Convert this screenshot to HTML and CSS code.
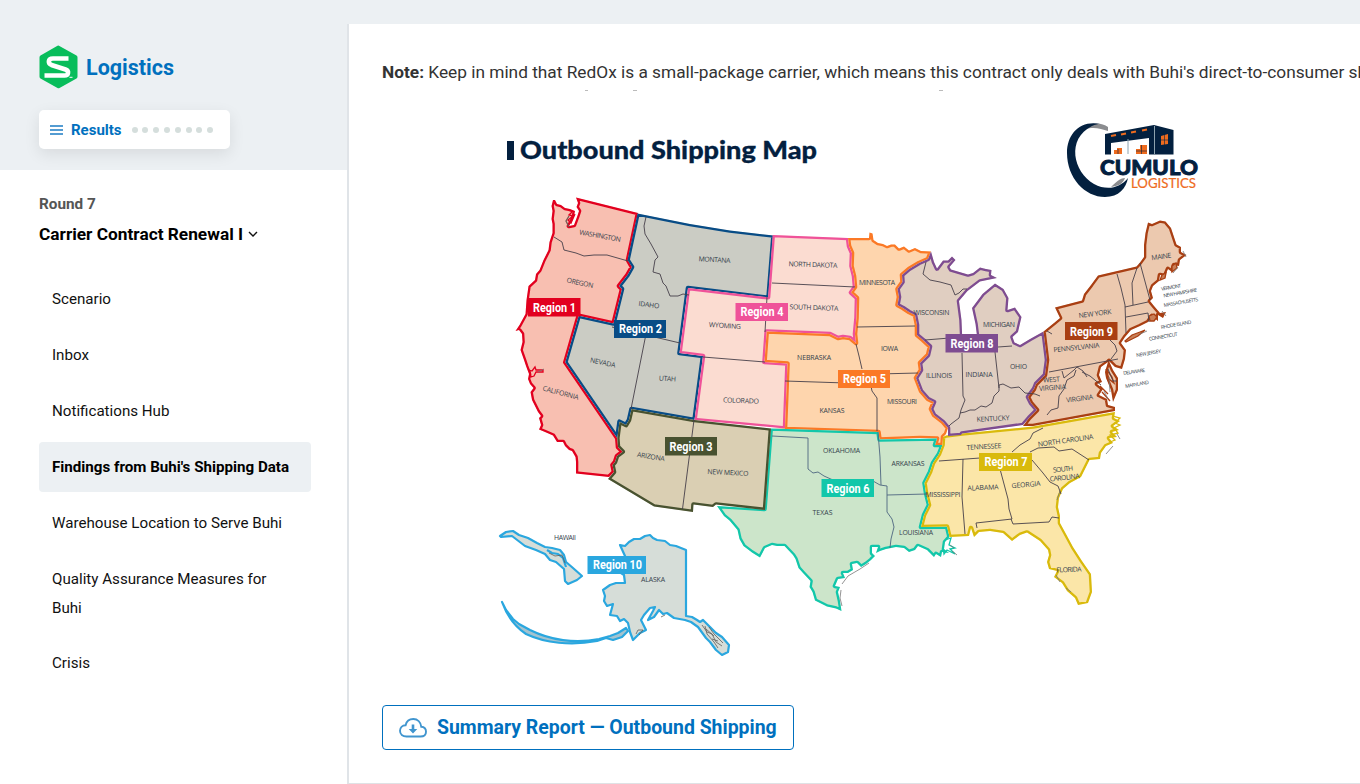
FILE: index.html
```
<!DOCTYPE html>
<html lang="en">
<head>
    <meta charset="UTF-8">
    <meta name="viewport" content="width=device-width, initial-scale=1.0">
    <title>Logistics - Findings from Buhi's Shipping Data</title>
    <link rel="stylesheet" href="styles.css">
</head>
<body>
    <div class="layout">
        <aside class="sidebar">
            <div class="sidebar-header">
                <div class="brand">
                    <svg class="brand-logo" viewBox="0 0 38 44">
                        <path d="M19 .5 L37 10.5 Q38 11 38 12.500 V31.500 Q38 33 37 33.500 L20 43 Q19 43.500 18 43 L1 33.500 Q0 33 0 31.500 V12.500 Q0 11 1 10.500 L18 .8 Z" fill="#08bd5b"/>
                        <path d="M29 13.500 H13.500 C8 13.500 8.500 18.500 12 20 L26 24.500 C30 26 29 30.500 25 30.500 H5" fill="none" stroke="#fff" stroke-width="4.600"/>
                        <path d="M30 32.300 H33" stroke="#fff" stroke-width="1"/>
                    </svg>
                    <span class="brand-name">Logistics</span>
                </div>
                <button class="results">
                    <svg class="menu-icon" viewBox="0 0 13 10">
                        <path d="M0 1H13M0 5H13M0 9H13" stroke="#1c7cc3" stroke-width="1.400"/>
                    </svg>
                    <span>Results</span>
                    <span class="dots"><i></i><i></i><i></i><i></i><i></i><i></i><i></i><i></i></span>
                </button>
            </div>
            <div class="round">
                <div class="round-label">Round 7</div>
                <div class="round-title">Carrier Contract Renewal I
                    <svg class="chevron" viewBox="0 0 10 6"><path d="M1 1L5 5L9 1" fill="none" stroke="#111" stroke-width="1.400"/></svg>
                </div>
            </div>
            <nav class="menu">
                <a>Scenario</a>
                <a>Inbox</a>
                <a>Notifications Hub</a>
                <a class="active">Findings from Buhi's Shipping Data</a>
                <a>Warehouse Location to Serve Buhi</a>
                <a>Quality Assurance Measures for Buhi</a>
                <a>Crisis</a>
            </nav>
        </aside>

        <main class="content">
            <p class="note"><strong>Note:</strong> Keep in mind that RedOx is a small-package carrier, which means this contract only deals with Buhi's direct-to-consumer shipments.</p>

            <!-- outbound shipping map -->
            <svg class="map" viewBox="382 90 978 600">
                <defs>
                    <path id="r1" d="M555 200L557 204L561 205L565 208L570 209L575 211L574 216L572 221L569 226L574 225L577 217L579 211L576.500 207L578 203L576 197.500L638 213L628 260L632 267L627.500 275L619 286L622 289L613.500 323.500L578.700 315.700L565.300 362.300L617.300 438.300L618 447L622.700 451.700L617 456L615 462L612.500 465L614 472L609 477L576 473.500L576 462L575.500 457L572 451L569 450L565 446L563 442L557 442L553 435.500L545 432L539 429.500L541 425L539 418L541 416L538 412L532 400L530.500 392L533.500 388L530 384L528 379L529 374L526 366L524 360L520.500 350L522.500 342L522 334L519 330L515.500 331L519.500 325L525.500 314L526.500 300L528.500 286L535 280L536 274L539.500 270L543.500 260L548.500 250L549.500 242L552.500 233L552.500 224L551.500 219L552.500 211L551.500 206L553 200Z"/>
                    <path id="r2" d="M637.500 213.500L690 224L730 230.500L773.500 235.500L768.500 297.800L688 288L679.500 353L703 356L694.500 420L631.500 409L629 420L626 425L619.500 421.700L617.300 438.300L565.300 362.300L578.700 315.700L613.500 323.500L622 289L619 286L627.500 275L632 267L627.500 260Z"/>
                    <path id="r3" d="M631.500 409L694.500 420L771 428.500L765 510L716 504.500L713 507L693.500 504.500L693 512L654 506.500L608 479L614 472L612.500 465L615 462L617 456L622.700 451.700L618 447L617.300 438.300L619.500 421.700L626 425L629 420Z"/>
                    <path id="r4" d="M772.700 235L848 238L849 246L852 253L851.500 266L854 276L855 287L851 292.500L857 298L856.500 318L855 334L856 343L850 338L843 337L838 338L830 334L766.700 331.500L764.500 362L787.500 363.500L785 428.500L694.500 420L703 356L679.500 353L688 288L768 297.300Z"/>
                    <path id="r5" d="M848 238L869 238L869.500 232.500L872.500 233.500L873.500 240L878 243L883 244L887 246L891 244.500L895 244.500L899 248.500L904 246.500L909 250.500L915 248L921 251L931 251.500L928 259L919 263L909 269L902 275L902.500 282L897.500 289L899 297L897.500 305L903 308L909 312L915 315L917 325L917 335L923 340L930 346.500L928 355L920 363L921 370L916 378L921 391L928 399L934 402L931 409L934 415L943 422L948 428L946 434L943 437L942.500 445L935 445L937 438.500L920 438L879.500 439.500L878.500 432L770.700 428.500L785 428.500L787.500 363.500L764.500 362L766.700 331.500L830 334L838 338L843 337L850 338L856 343L855 334L856.500 318L857 298L851 292.500L855 287L854 276L851.500 266L852 253L849 246Z"/>
                    <path id="r6" d="M770.700 428.500L878.500 432L879.500 439.500L937 438.500L935 445L942.500 445L939 454L933 463L930 472L924.500 483L926 493L929 505L924 515L921 527L947 526.500L949.500 537L945 542L944 549L949 553L942 552L941 557L936 554L934 557L927 550L918 546L915 550L909 552L904 548L896 547L886 549L880 551L876 553L878 547L872 547L872 553L875 556L871 560L866 564L861 567L857 563L852 564L853 570L848 573L843 573L845 578L838 579L835 586L840 587L838 592L840 601L841.500 611L836 608.500L827 606.500L815 600.500L812.500 592L809.500 587L810.500 581L803 573L798.500 568L795.500 559L793 555L784.500 546L777 546L772 545L765 548L760 557.500L752 552.500L743.500 546L739.500 539L737.500 530L729.500 520.500L724 516L717 506L764.500 509Z"/>
                    <path id="r7" d="M946 435.500L962 433.500L1033 426.500L1115 412L1114 418L1120 421L1113 426L1119 430L1112 432L1117 437L1109 438L1113 443L1106 446L1101 453L1100 459L1089.500 460L1084 471L1081 477L1070 483L1063 489L1059 498L1058 507L1060 516L1060 523L1066 534L1073 547L1082 561L1091 574L1092 592L1088 603L1078 605L1075 598L1067 591L1062 583L1054 577L1057 571L1049 569L1047 562L1049 555L1048 550L1040 541L1027 532.500L1020 535L1012 541L1003 533L990 531L979 532L974 537L971 528L969 536L949.500 537L947 526.500L921 527L924 515L929 505L926 493L924.500 483L930 472L933 463L939 454L942.500 445L943 437Z"/>
                    <path id="r8" d="M931 251.500L934 262L937 268.500L943 260.500L948 260.500L952 256.500L955.500 260L949.500 267L951 269.500L968 274.500L973 273L980 267.500L986 269L991.500 270L991 275L997 278L980 281.500L967.500 291L959 301L961.500 320L962.500 344H978L975.500 324L972 308L982.500 294L995 283.500L1003.500 289L1008.500 298L1007.500 310L1015 307.500L1021.500 317L1018 332L1012.500 337L1014.500 342.500L1020 345L1030 339L1043.500 331.500L1047 360L1045 375L1036 384L1034 389L1028 397L1031 403L1037 410L1029 418L1023 425L962 433.500L961 435L948 436L948 428L943 422L934 415L931 409L934 402L928 399L921 391L916 378L921 370L920 363L928 355L930 346.500L923 340L917 335L917 325L915 315L909 312L903 308L897.500 305L899 297L897.500 289L902.500 282L902 275L909 269L919 263L928 259Z"/>
                    <path id="r9" d="M1043.500 331.500L1054 323L1060 318L1055 307.500L1082 300.500L1084 294L1091 285L1098 275.500L1136.500 266.500L1140 262.500L1144 257L1144 245L1145.500 233L1148 222.500L1152 224L1160 220.500L1165.500 221.500L1171 228L1176.500 244.500L1181 247L1181 252L1186.500 255L1180 260L1179 266L1174 265L1172 272L1168 269L1165 276L1160 275L1159 281L1153 286L1151 291L1153 298L1150 301L1154 306L1160 313L1166 312L1163 318L1158 315L1158 321L1152 316L1148 322L1140 326L1131 330L1125 337L1121 343L1126 350L1125 359L1122 369L1115 367L1109 361L1113 370L1118 378L1118 390L1113 402L1111 390L1106 378L1105 372L1108 362L1101 367L1099 375L1102 382L1097 384L1103 389L1099 395L1107 399L1108 405L1115 407L1115 411L1033 426L1023 426L1029 418L1037 410L1031 403L1028 397L1034 389L1036 384L1045 375L1047 360Z"/>
                    <clipPath id="c1"><use href="#r1"/></clipPath>
                    <clipPath id="c2"><use href="#r2"/></clipPath>
                    <clipPath id="c3"><use href="#r3"/></clipPath>
                    <clipPath id="c4"><use href="#r4"/></clipPath>
                    <clipPath id="c5"><use href="#r5"/></clipPath>
                    <clipPath id="c6"><use href="#r6"/></clipPath>
                    <clipPath id="c7"><use href="#r7"/></clipPath>
                    <clipPath id="c8"><use href="#r8"/></clipPath>
                    <clipPath id="c9"><use href="#r9"/></clipPath>
                </defs>

                <path d="M585 90.500h3M633 90.500h4M939 90.500h4" stroke="#bbb"/>

                <rect x="507" y="141" width="7" height="19" fill="#03203f"/>
                <text class="map-title" x="520" y="159" textLength="297" lengthAdjust="spacingAndGlyphs">Outbound Shipping Map</text>

                <g class="cumulo">
                    <path d="M1108 127C1100 121 1086 122 1077 134C1088 125 1099 128 1108 131ZM1125 178C1120 178 1115 183 1111 187C1118 186 1123 184 1125 178Z" fill="#8b8c8f"/>
                    <path d="M1100 124C1080 120 1067 134 1067 153C1067 178 1085 197 1105 197C1119 197 1126 188 1128 178C1120 188 1107 191 1094 184C1073 172 1066 139 1092 126C1095 124.500 1098 124 1100 124Z" fill="#03203f"/>
                    <path d="M1105 134L1154 125L1173.500 130V154.500H1149V138L1111 143V154.500H1105Z" fill="#03203f"/>
                    <path d="M1128 139V154M1154.500 126V154" stroke="#8da2ae" stroke-width="1"/>
                    <path d="M1111 136l5-1M1121 134.500l5-1M1131 132.500l5-1M1142 130.500l5-1" stroke="#ee6b1e" stroke-width="2"/>
                    <path d="M1161 136l7-2v10l-7 1zM1114 150h3v-2h5v6h-8zM1136 149h4v-4h7v9h-11z" fill="#ee6b1e"/>
                    <path d="M1164.500 134v11M1161 140h7M1118 149v5M1141.500 145v9M1136 151h11" stroke="#03203f" stroke-width=".6"/>
                    <text class="cumulo-name" x="1100" y="174.500" textLength="98" lengthAdjust="spacingAndGlyphs">CUMULO</text>
                    <text class="cumulo-sub" x="1131" y="188" textLength="65" lengthAdjust="spacingAndGlyphs">LOGISTICS</text>
                </g>

                <g class="region-area">
                    <use href="#r1" clip-path="url(#c1)" fill="#f8bfb1" stroke="#e2001f"/>
                    <use href="#r2" clip-path="url(#c2)" fill="#cbccc4" stroke="#084c86"/>
                    <use href="#r4" clip-path="url(#c4)" fill="#fbdcd1" stroke="#ef5299"/>
                    <use href="#r5" clip-path="url(#c5)" fill="#fed5ad" stroke="#fb7926"/>
                    <use href="#r6" clip-path="url(#c6)" fill="#cce5ca" stroke="#12c7aa"/>
                    <use href="#r7" clip-path="url(#c7)" fill="#fbe6a8" stroke="#d9ba0c"/>
                    <use href="#r8" clip-path="url(#c8)" fill="#e0cec1" stroke="#7e4c91"/>
                    <use href="#r9" clip-path="url(#c9)" fill="#ecc9af" stroke="#a93f13"/>
                    <use href="#r3" clip-path="url(#c3)" fill="#dacfb3" stroke="#485230"/>
                </g>

                <!-- ragged coast details -->
                <g class="coast">
                    <path d="M573 211l-4 4 4 1-5 4 3 3 4-9M529 370l3 1 3-4 1 3 7 0 0 2-7 0-2 4-3 1-1-5z" stroke="#e2001f"/>
                    <path d="M1125 341l7-6 8-3 5-2-7 6-12 6zM1149 316l5-2 3 3-3 4-4 0zM1172 266l4-3 1 5-5 4zM1162 275l4-2-1 5-5 2z" stroke="#a93f13" fill="#c98058"/>
                    <path d="M1106 369l6 8 2 6-5-4zM1100 386l8 8M1102 392l8 9" stroke="#a93f13"/>
                    <path d="M1113 416l7 2-5 5 5 2-6 3 4 5-8 2 5 5-5 2" stroke="#d9ba0c"/>
                    <path d="M945 540l6-2-2 7 6 3-5 1 5 5-8-4-3 4-1-7" stroke="#12c7aa"/>
                    <path d="M569 216l-3 5 3 6" stroke="#745953"/>
                    <path d="M544 369l-6 3M950 545l4 3M952 551l5 4M841 590l-1 8 2 8M869 563l-9 6-12 7-6 8M1066 588l5 4M1056 575l4 7M1178 267l-5 6M1183 251l3 6M1162 311l4 5M1109 377l1 15M1104 391l4 8M1140 334l7-3M1117 434l3 5M1113 446l-7 8M1060 491l-3 9" stroke="#777"/>
                </g>

                <!-- state borders -->
                <g class="state-lines">
                    <path d="M554 237l8 5 2 8 12 3 8 3 10-1 13 0 21 6"/>
                    <path d="M646 217l-2 9 1 8 6 10 7 13-3 3-2 12 7 2 3 9 3 3 4 10 8 0 5-2 6 1M612 327l68 16M646 334l-15 75"/>
                    <path d="M693 421M694 420L682.500 509M767 297l-2 35M703 357l62 5M772 283l83 4M785 381l61 2"/>
                    <path d="M857 327l58-1M856 344l3 12 3 13M864 374l7 12 1 5 5 7v33M878 374l40-1"/>
                    <path class="south" d="M772 436l36 2 0 31 5 4 5-1 6 4 9 4 7 0 8 6M873 481l7 4 7 1 0 26 5 7 2 8-3 12-1 9M878 432l2 25 1 28M887 495l40-1"/>
                    <path d="M926 262l-3 12 7 6 10 2 11 3 4 10 4-2 4-4 4 0M925 340l37-3M962 353l1 43 2 4-4 10-2 8-8 6-2 2M960 413l5-1 5-2 5 0 6-4 5 1 6-4 2-7 5-5 0-6 4-1 8 4 8-1 6 6 10 1 5 2M995 352l4 36M998 347l14-1"/>
                    <path d="M1047 331l5 3M1049 372l69-13M1062 371l2 7 10-8 3-3 6 4 4 6M1076 370l-2 6-7 4-3 9-5 7-1 12-7 2-4 5M1082 372l8 4 11 9M1110 340l5 5 2 6-6 8M1117 274l4 14 4 17 1 28M1137 268l-5 15 1 22M1140 263l10 37M1125 307l23-5M1126 317l22-4 1 9M1108 369l5 12h4"/>
                    <path d="M939 461l41-3M963 459l-1 38 3 37M1000 469l8 30 1 10 3 10-36 4 1 5M1011 519l2 5 36-2 3-5 7 1M1012 452l8-7 10-6 3-6 10-5M1030 452l8-4 16-1 5 4 13-2 17 11M1032 460l11 13 7 9 8 4 3 8"/>
                </g>

                <!-- region 10 -->
                <g class="alaska">
                    <path d="M620 545L625 546L629 542L634 539L640 539L645 536L650 535L653 538L657 540L665 541L670 545L676 546L686 550V616L692 617L697 620L700 622L703 620L710 627L716 633L722 637L729 645L728 652L722 655L716 650L710 642L706 638L698 627L691 622L685 620L674 618L667 613L663 614L659 610L654 617L648 620L653 611L655 607L650 608L644 615L641 620L646 630L640 633L633 640L630 632L628 623L624 619L620 621L617 616L610 615L613 604L607 606L604 601L605 596L603 590L610 585L616 583H625L624 575L621 573L625 556Z" fill="#d6ddd8"/>
                    <path d="M500 536L506 532L513 531L519 535L528 538L537 543L545 547L552 548L560 550L564 555L566 562L573 568L582 576L577 580L568 584L565 581L564 569L556 562L550 560L545 554L536 550L525 546L512 536L501 537Z" fill="#d6ddd8"/>
                    <path d="M502 602L506 610L513 619L519 624L530 630C550 640 575 644 599 639L610 636L618 633L626 628L628 631L622 637L613 640L606 638L597 641C571 646 545 643 526 634C514 626 507 616 502 602Z" fill="#a4c3cf"/>
                    <path d="M547 550l5 3 6 1 5 4 3 9" fill="none"/>
                </g>
                <path d="M702 625l5 7 5 2 4 8 6 4M706 629l8 7M712 639l6 2M636 634l2-4 5 0-4 5M549 553l6 3 7-1 3 8M661 617l4-2M705 626l2 8 7 8 4 6M709 627l5 7 9 9" fill="none" stroke="#615d59" stroke-width=".8"/>

                <g class="states">
                    <text x="600" y="238" textLength="42" transform="rotate(10 599 236)">WASHINGTON</text>
                    <text x="580" y="285" textLength="27" transform="rotate(12 579 283)">OREGON</text>
                    <text x="561" y="395" textLength="37" transform="rotate(15 560 392)">CALIFORNIA</text>
                    <text x="714.500" y="262" textLength="32" transform="rotate(3 714 260)">MONTANA</text>
                    <text x="649" y="307" textLength="21" transform="rotate(8 648 304)">IDAHO</text>
                    <text x="603" y="365" textLength="26" transform="rotate(12 603 362)">NEVADA</text>
                    <text x="667.500" y="381" textLength="17" transform="rotate(4 667 378)">UTAH</text>
                    <text x="725" y="328" textLength="32" transform="rotate(4 725 325)">WYOMING</text>
                    <text x="741" y="403" textLength="36" transform="rotate(2 741 400)">COLORADO</text>
                    <text x="651" y="459" textLength="28" transform="rotate(9 651 456)">ARIZONA</text>
                    <text x="728" y="475" textLength="41" transform="rotate(3 728 472)">NEW MEXICO</text>
                    <text x="813" y="267" textLength="49" transform="rotate(2 813 264)">NORTH DAKOTA</text>
                    <text x="814" y="310" textLength="49" transform="rotate(2 814 307)">SOUTH DAKOTA</text>
                    <text x="814" y="360" textLength="34">NEBRASKA</text>
                    <text x="832" y="413" textLength="25">KANSAS</text>
                    <text x="877" y="285" textLength="36">MINNESOTA</text>
                    <text x="889.500" y="351" textLength="17">IOWA</text>
                    <text x="902" y="404" textLength="30">MISSOURI</text>
                    <text x="841.500" y="453" textLength="37">OKLAHOMA</text>
                    <text x="908" y="466" textLength="33">ARKANSAS</text>
                    <text x="822.500" y="515" textLength="20">TEXAS</text>
                    <text x="916" y="535" textLength="34">LOUISIANA</text>
                    <text x="931.500" y="315" textLength="36">WISCONSIN</text>
                    <text x="999" y="327" textLength="32">MICHIGAN</text>
                    <text x="939" y="378" textLength="26">ILLINOIS</text>
                    <text x="979" y="377" textLength="27">INDIANA</text>
                    <text x="1018.500" y="369" textLength="17">OHIO</text>
                    <text x="993" y="421" textLength="33" transform="rotate(-3 993 418)">KENTUCKY</text>
                    <text x="984" y="449" textLength="35" transform="rotate(-3 984 446)">TENNESSEE</text>
                    <text x="1065.500" y="443" textLength="56" transform="rotate(-8 1065 440)">NORTH CAROLINA</text>
                    <text x="1063" y="471.500" textLength="20" transform="rotate(-6 1063 469)">SOUTH</text>
                    <text x="1064.500" y="480" textLength="30" transform="rotate(-6 1064 477)">CAROLINA</text>
                    <text x="943" y="497" textLength="35">MISSISSIPPI</text>
                    <text x="983" y="490" textLength="31" transform="rotate(-2 983 487)">ALABAMA</text>
                    <text x="1026" y="487" textLength="29" transform="rotate(-5 1026 484)">GEORGIA</text>
                    <text x="1069" y="572" textLength="25" transform="rotate(-2 1069 570)">FLORIDA</text>
                    <text x="1161.500" y="259" textLength="20" transform="rotate(-8 1161 257)">MAINE</text>
                    <text x="1095" y="316" textLength="33" transform="rotate(-7 1095 313)">NEW YORK</text>
                    <text x="1076.500" y="350" textLength="46" transform="rotate(-6 1076 348)">PENNSYLVANIA</text>
                    <text x="1051.500" y="382" textLength="17" transform="rotate(-4 1051 380)">WEST</text>
                    <text x="1052.500" y="390" textLength="27" transform="rotate(-4 1052 388)">VIRGINIA</text>
                    <text x="1079.500" y="401" textLength="27" transform="rotate(-7 1079 398)">VIRGINIA</text>
                    <text x="565" y="540" textLength="22">HAWAII</text>
                    <text x="653" y="582" textLength="24">ALASKA</text>
                </g>
                <g class="states small">
                    <text x="1171" y="289" textLength="20" transform="rotate(-10 1171 287)">VERMONT</text>
                    <text x="1180" y="294.500" textLength="34" transform="rotate(-10 1180 292)">NEW HAMPSHIRE</text>
                    <text x="1181" y="304" textLength="35" transform="rotate(-10 1181 302)">MASSACHUSETTS</text>
                    <text x="1176" y="326.500" textLength="31" transform="rotate(-10 1175 324)">RHODE ISLAND</text>
                    <text x="1163" y="338.500" textLength="29" transform="rotate(-10 1162 336)">CONNECTICUT</text>
                    <text x="1148.500" y="355" textLength="25" transform="rotate(-10 1148 353)">NEW JERSEY</text>
                    <text x="1134" y="373.500" textLength="22" transform="rotate(-8 1133 371)">DELAWARE</text>
                    <text x="1137" y="386" textLength="24" transform="rotate(-10 1137 384)">MARYLAND</text>
                </g>

                <g class="labels">
                    <rect x="528" y="298" width="52.500" height="18.500" fill="#e2001f"/>
                    <text x="554.500" y="311.700" textLength="43" lengthAdjust="spacingAndGlyphs">Region 1</text>
                    <rect x="614" y="320" width="52" height="18" fill="#084c86"/>
                    <text x="640.500" y="333.300" textLength="43" lengthAdjust="spacingAndGlyphs">Region 2</text>
                    <rect x="665" y="437" width="52" height="18.500" fill="#485230"/>
                    <text x="691" y="450.700" textLength="43" lengthAdjust="spacingAndGlyphs">Region 3</text>
                    <rect x="735.500" y="303" width="52.500" height="18" fill="#ef5299"/>
                    <text x="762" y="316.300" textLength="43" lengthAdjust="spacingAndGlyphs">Region 4</text>
                    <rect x="838" y="370" width="52" height="18" fill="#fb7926"/>
                    <text x="864.500" y="383.300" textLength="43" lengthAdjust="spacingAndGlyphs">Region 5</text>
                    <rect x="821.500" y="479" width="52.500" height="18" fill="#12c7aa"/>
                    <text x="848" y="492.500" textLength="43" lengthAdjust="spacingAndGlyphs">Region 6</text>
                    <rect x="979" y="453" width="53" height="18" fill="#d9ba0c"/>
                    <text x="1006" y="466.300" textLength="43" lengthAdjust="spacingAndGlyphs">Region 7</text>
                    <rect x="945.500" y="334" width="52.500" height="18.500" fill="#7e4c91"/>
                    <text x="972" y="347.700" textLength="43" lengthAdjust="spacingAndGlyphs">Region 8</text>
                    <rect x="1065" y="322" width="52.500" height="18" fill="#a93f13"/>
                    <text x="1091.500" y="335.500" textLength="43" lengthAdjust="spacingAndGlyphs">Region 9</text>
                    <rect x="587.500" y="556" width="58.500" height="18" fill="#2aa7df"/>
                    <text x="617.500" y="569.300" textLength="49" lengthAdjust="spacingAndGlyphs">Region 10</text>
                </g>
            </svg>

            <a class="download">
                <svg class="cloud-icon" viewBox="0 0 28 20">
                    <path d="M7.500 18.500H21.500C25 18.500 27 16.500 27 13.700C27 11 25 9 22.300 8.800C21.700 4 18.500 1 14.300 1C10.500 1 7.500 3.300 6.600 7.200C3.300 7.300 1 9.700 1 12.800C1 16.200 3.700 18.500 7.500 18.500Z" fill="none" stroke="#4095cf" stroke-width="1.900"/>
                    <path d="M12.700 6.500H15.300V11H18.300L14 15.500L9.700 11H12.700Z" fill="#4095cf"/>
                </svg>
                <span>Summary Report — Outbound Shipping</span>
            </a>
        </main>
    </div>
</body>
</html>
```
FILE: styles.css
```
* {
    box-sizing: border-box;
}
body {
    margin: 0;
    padding-top: 24px;
    height: 784px;
    overflow: hidden;
    font-family: Roboto, Arial, sans-serif;
    background: #ecf0f3;
    color: #111;
}
.layout {
    display: flex;
    height: 760px;
}
.sidebar {
    width: 347px;
    flex: none;
    background: #fff;
}
.sidebar-header {
    height: 146px;
    padding: 21px 39px 0;
    background: #ecf0f3;
}
.brand {
    display: flex;
    align-items: center;
    gap: 8px;
    height: 44px;
}
.brand-logo {
    width: 39px;
    height: 44px;
}
.brand-name {
    font-size: 21.5px;
    font-weight: 700;
    color: #0070be;
}
.results {
    display: flex;
    align-items: center;
    width: 191px;
    height: 39px;
    margin-top: 21px;
    padding: 0 11px;
    border: none;
    border-radius: 5px;
    background: #fff;
    box-shadow: 0 5px 16px rgba(0,0,0,0.09);
    font-family: inherit;
    font-size: 15px;
    font-weight: 700;
    color: #0070be;
}
.menu-icon {
    width: 13px;
    height: 10px;
    margin-right: 8px;
}
.dots {
    display: flex;
    gap: 4.8px;
    margin-left: 10px;
}
.dots i {
    width: 6px;
    height: 6px;
    border-radius: 50%;
    background: #d5dedc;
}
.round {
    padding: 24px 39px 0;
}
.round-label {
    font-size: 15.3px;
    line-height: 20px;
    font-weight: 700;
    color: #555;
}
.round-title {
    margin-top: 8px;
    font-size: 17.3px;
    line-height: 24px;
    font-weight: 700;
    color: #000;
}
.chevron {
    width: 10px;
    height: 6px;
    margin-left: 1px;
    vertical-align: 3px;
}
.menu {
    display: flex;
    flex-direction: column;
    gap: 6px;
    padding: 28px 36px 0 39px;
}
.menu a {
    padding: 11px 20px 10px 13px;
    border-radius: 4px;
    font-size: 15.15px;
    line-height: 29px;
}
.menu a:nth-child(6) {
    padding-bottom: 9px;
    padding-right: 36px;
}
.menu .active {
    background: #ecf0f3;
    font-weight: 700;
    color: #000;
}
.content {
    flex: 1;
    min-width: 0;
    padding: 36px 0 0 33px;
    border-left: 2px solid #e0e4e8;
    border-bottom: 1px solid #dfe2e5;
    background: #fff;
    overflow: hidden;
}
.note {
    margin: 0;
    height: 30px;
    font-size: 17.3px;
    line-height: 25px;
    color: #333;
    white-space: nowrap;
}
.map {
    display: block;
    width: 978px;
    height: 600px;
}
.map-title {
    font: 900 24.5px Lato, sans-serif;
    fill: #03203f;
    stroke: #03203f;
    stroke-width: .3;
}
.cumulo-name {
    font: 900 21.5px Lato, sans-serif;
    fill: #03203f;
    stroke: #03203f;
    stroke-width: .9;
}
.cumulo-sub {
    font: 400 12.7px Lato, sans-serif;
    fill: #ee6b1e;
    stroke: #ee6b1e;
    stroke-width: .2;
}
.region-area {
    stroke-width: 4.6;
    stroke-linejoin: round;
}
.coast {
    fill: none;
    stroke-width: 1.3;
}
.coast path:last-child {
    stroke-width: .8;
}
.state-lines {
    fill: none;
    stroke: #46404a;
    stroke-width: .9;
}
.south {
    stroke: #4d6580;
}
.alaska {
    stroke: #2aa7df;
    stroke-width: 2.2;
    stroke-linejoin: round;
}
.states {
    font: 6.9px "Open Sans", sans-serif;
    text-anchor: middle;
    fill: #35424c;
}
.small {
    font-size: 5px;
}
.labels {
    font: 700 12.6px Roboto, sans-serif;
    text-anchor: middle;
    fill: #fff;
}
.download {
    display: flex;
    align-items: center;
    gap: 10px;
    width: 412px;
    height: 45px;
    margin-top: 15px;
    padding-left: 16px;
    border: 1px solid #0070be;
    border-radius: 4px;
    font-size: 19.45px;
    font-weight: 700;
    color: #0070be;
    white-space: nowrap;
}
.cloud-icon {
    width: 28px;
    height: 20px;
}
```
